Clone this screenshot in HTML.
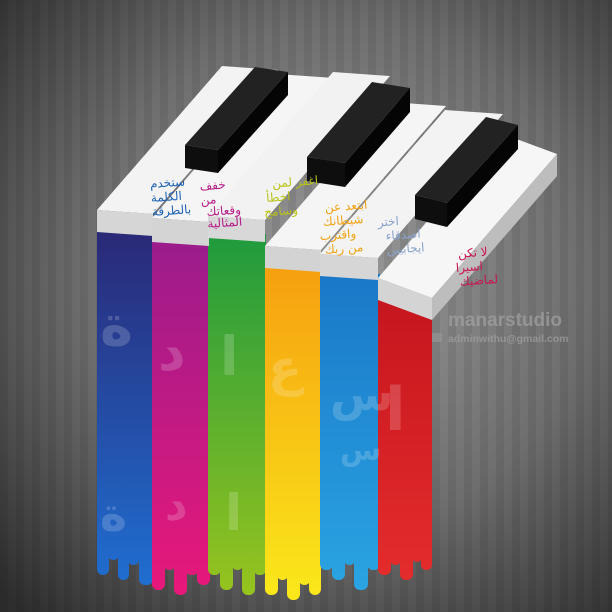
<!DOCTYPE html>
<html><head><meta charset="utf-8"><style>
html,body{margin:0;padding:0;width:612px;height:612px;overflow:hidden;background:#555}
svg{display:block}
.ar{font-family:"DejaVu Sans",sans-serif;font-size:12px;font-weight:normal}
</style></head><body>
<svg width="612" height="612" viewBox="0 0 612 612" xmlns="http://www.w3.org/2000/svg">
<defs>
<radialGradient id="bg" cx="0.55" cy="0.45" r="0.75">
<stop offset="0" stop-color="#9a9a9a"/><stop offset="0.55" stop-color="#6e6e6e"/><stop offset="1" stop-color="#2e2e2e"/>
</radialGradient>
<pattern id="stripes" width="16" height="612" patternUnits="userSpaceOnUse">
<rect width="8" height="612" fill="#000" opacity="0.07"/>
</pattern>
<linearGradient id="g1" gradientUnits="userSpaceOnUse" x1="0" y1="222" x2="0" y2="590"><stop offset="0" stop-color="#2a2774"/><stop offset="1" stop-color="#1f6fd2"/></linearGradient>
<linearGradient id="g2" gradientUnits="userSpaceOnUse" x1="0" y1="238" x2="0" y2="595"><stop offset="0" stop-color="#9a1c8c"/><stop offset="1" stop-color="#e8187a"/></linearGradient>
<linearGradient id="g3" gradientUnits="userSpaceOnUse" x1="0" y1="234" x2="0" y2="595"><stop offset="0" stop-color="#1f9a3e"/><stop offset="1" stop-color="#97c41e"/></linearGradient>
<linearGradient id="g4" gradientUnits="userSpaceOnUse" x1="0" y1="268" x2="0" y2="600"><stop offset="0" stop-color="#f6a010"/><stop offset="1" stop-color="#fae81a"/></linearGradient>
<linearGradient id="g5" gradientUnits="userSpaceOnUse" x1="0" y1="274" x2="0" y2="590"><stop offset="0" stop-color="#1a78c8"/><stop offset="1" stop-color="#2aa4e2"/></linearGradient>
<linearGradient id="g6" gradientUnits="userSpaceOnUse" x1="0" y1="300" x2="0" y2="580"><stop offset="0" stop-color="#c6161e"/><stop offset="1" stop-color="#e42c2c"/></linearGradient>
</defs>
<rect width="612" height="612" fill="url(#bg)"/>
<rect width="612" height="612" fill="url(#stripes)"/>

<!-- strips with drips -->
<g fill="url(#g1)">
<rect x="97" y="222" width="56" height="335"/>
<rect x="97" y="540" width="12" height="35" rx="6"/><rect x="108" y="540" width="11" height="20" rx="5"/><rect x="118" y="540" width="11" height="40" rx="5"/><rect x="128" y="540" width="11" height="25" rx="5"/><rect x="139" y="540" width="14" height="45" rx="6"/>
</g>
<g fill="url(#g2)">
<rect x="152" y="238" width="58" height="312"/>
<rect x="152" y="540" width="13" height="50" rx="6"/><rect x="164" y="540" width="11" height="30" rx="5"/><rect x="174" y="540" width="13" height="55" rx="6"/><rect x="186" y="540" width="12" height="35" rx="5"/><rect x="197" y="540" width="13" height="45" rx="6"/>
</g>
<g fill="url(#g3)">
<rect x="208" y="234" width="58" height="320"/>
<rect x="208" y="545" width="13" height="30" rx="6"/><rect x="220" y="545" width="13" height="45" rx="6"/><rect x="232" y="545" width="11" height="25" rx="5"/><rect x="242" y="545" width="13" height="50" rx="6"/><rect x="254" y="545" width="12" height="30" rx="5"/>
</g>
<g fill="url(#g4)">
<rect x="265" y="268" width="56" height="290"/>
<rect x="265" y="550" width="13" height="45" rx="6"/><rect x="277" y="550" width="11" height="30" rx="5"/><rect x="287" y="550" width="13" height="50" rx="6"/><rect x="299" y="550" width="11" height="35" rx="5"/><rect x="309" y="550" width="12" height="45" rx="6"/>
</g>
<g fill="url(#g5)">
<rect x="320" y="274" width="60" height="278"/>
<rect x="320" y="540" width="13" height="30" rx="6"/><rect x="332" y="540" width="13" height="40" rx="6"/><rect x="344" y="540" width="11" height="25" rx="5"/><rect x="354" y="540" width="14" height="50" rx="6"/><rect x="367" y="540" width="13" height="30" rx="6"/>
</g>
<g fill="url(#g6)">
<rect x="378" y="300" width="54" height="250"/>
<rect x="378" y="540" width="13" height="35" rx="6"/><rect x="390" y="540" width="11" height="25" rx="5"/><rect x="400" y="540" width="13" height="40" rx="6"/><rect x="412" y="540" width="10" height="22" rx="5"/><rect x="421" y="540" width="11" height="30" rx="5"/>
</g>

<!-- faint letters on strips -->
<g font-family="DejaVu Sans,sans-serif" font-weight="bold" fill="#fff" opacity="0.18">
<text x="100" y="345" font-size="56">ة</text>
<text x="100" y="530" font-size="46">ة</text>
<text x="158" y="370" font-size="54">د</text>
<text x="165" y="520" font-size="44">د</text>
<text x="220" y="375" font-size="54">ا</text>
<text x="225" y="530" font-size="50">ا</text>
<text x="268" y="385" font-size="50">ع</text>
<text x="330" y="410" font-size="46">س</text>
<text x="340" y="460" font-size="30">س</text>
<text x="385" y="430" font-size="60">ا</text>
</g>

<!-- white keys -->
<g stroke="none">
<polygon points="97,210 153,214 278,70 222,66" fill="#f3f3f3"/>
<polygon points="97,210 153,214 153,236 97,232" fill="#d6d6d6"/>
<polygon points="152,218 209,222 334,78 277,74" fill="#f5f5f5"/>
<polygon points="152,218 209,222 209,246 152,242" fill="#d4d4d4"/>
<polygon points="208,216 265,220 390,76 333,72" fill="#f2f2f2"/>
<polygon points="208,216 265,220 265,242 208,238" fill="#d8d8d8"/>
<polygon points="265,246 321,250 446,106 390,102" fill="#f5f5f5"/>
<polygon points="265,246 321,250 321,272 265,268" fill="#d3d3d3"/>
<polygon points="320,254 378,258 503,114 445,110" fill="#f3f3f3"/>
<polygon points="320,254 378,258 378,280 320,276" fill="#d6d6d6"/>
<polygon points="378,278 432,298 557,154 503,134" fill="#f6f6f6"/>
<polygon points="378,278 432,298 432,320 378,300" fill="#d4d4d4"/>
<polygon points="432,298 557,154 557,176 432,320" fill="#bdbdbd"/>
</g>

<!-- black keys -->
<polygon points="185,145 218,150 288,72 255,67" fill="#222"/>
<polygon points="185,145 218,150 218,173 185,168" fill="#0e0e0e"/>
<polygon points="218,150 288,72 288,95 218,173" fill="#050505"/>

<polygon points="307,157 345,163 410,88 372,82" fill="#222"/>
<polygon points="307,157 345,163 345,187 307,181" fill="#0e0e0e"/>
<polygon points="345,163 410,88 410,112 345,187" fill="#050505"/>

<polygon points="415,195 447,203 518,125 486,117" fill="#222"/>
<polygon points="415,195 447,203 447,227 415,219" fill="#0e0e0e"/>
<polygon points="447,203 518,125 518,149 447,227" fill="#050505"/>

<!-- key text -->
<g class="ar" text-anchor="end" direction="rtl">
<g fill="#1f63b4" transform="rotate(-4 150 185)"><text x="150" y="188">ستخدم</text><text x="150" y="202">الكلمة</text><text x="150" y="216">بالطرقة</text></g>
<g fill="#b61b86" transform="rotate(-4 205 190)"><text x="200" y="190">خفف</text><text x="200" y="204">من</text><text x="205" y="216">وقعاتك</text><text x="205" y="228">المثالية</text></g>
<g fill="#b9c41a" transform="rotate(-4 265 180)"><text x="272" y="188">اغفر لمن</text><text x="265" y="202">اخطأ</text><text x="262" y="216">وسامح</text></g>
<g fill="#f0a415" transform="rotate(-4 320 210)"><text x="325" y="212">ابتعد عن</text><text x="322" y="226">شيطانك</text><text x="318" y="240">واقترب</text><text x="322" y="254">من ربك</text></g>
<g fill="#8aa3cc" transform="rotate(-4 385 225)"><text x="378" y="226">اختر</text><text x="385" y="240">اصدقاء</text><text x="385" y="254">ايجابيين</text></g>
<g fill="#c81550" transform="rotate(-4 455 255)"><text x="458" y="258">لا تكن</text><text x="455" y="272">اسيرا</text><text x="458" y="286">لماضيك</text></g>
</g>

<!-- watermark -->
<text x="448" y="326" font-family="Liberation Sans,sans-serif" font-weight="bold" font-size="19" fill="#a0a0a0" opacity="0.75">manarstudio</text>
<rect x="432" y="333" width="10" height="9" fill="#9a9a9a" opacity="0.6"/>
<text x="448" y="342" font-family="Liberation Sans,sans-serif" font-weight="bold" font-size="10.5" fill="#a0a0a0" opacity="0.75">adminwithu@gmail.com</text>
</svg>
</body></html>
